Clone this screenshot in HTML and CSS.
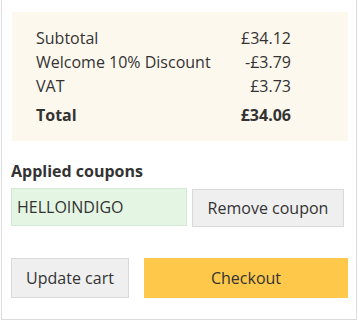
FILE: index.html
```html
<!DOCTYPE html>
<html>
<head>
<meta charset="utf-8">
<link rel="stylesheet" href="styles.css">
</head>
<body>
<div class="card">
  <div class="totals">
    <div class="row"><span>Subtotal</span><span>£34.12</span></div>
    <div class="row"><span>Welcome 10% Discount</span><span>-£3.79</span></div>
    <div class="row"><span>VAT</span><span>£3.73</span></div>
    <div class="row total"><span>Total</span><span>£34.06</span></div>
  </div>
  <div class="coupons">
    <h3 class="coupons-title">Applied coupons</h3>
    <div class="coupon-row">
      <div class="coupon-code">HELLOINDIGO</div>
      <button class="btn btn-remove">Remove coupon</button>
    </div>
  </div>
  <div class="actions">
    <button class="btn btn-update">Update cart</button>
    <button class="btn btn-checkout">Checkout</button>
  </div>
</div>
</body>
</html>
```

FILE: styles.css
```css
html, body {
  margin: 0;
  padding: 0;
  background: #fff;
}
body {
  font-family: "Open Sans", "Liberation Sans", sans-serif;
  color: #333;
  font-size: 16px;
}
.card {
  margin: 0 1px 1px 1px;
  height: 320px;
  box-sizing: border-box;
  border: 1px solid #dcdcdc;
  border-top: none;
  padding: 12px 8px 0 9px;
}
.totals {
  background: #fdf8ee;
  margin-left: 1px;
  padding: 14px 57px 14px 24px;
}
.row {
  display: flex;
  justify-content: space-between;
  line-height: 24px;
}
.row.total {
  font-weight: 700;
  margin-top: 5px;
}
.coupons {
  margin-top: 18px;
}
.coupons-title {
  margin: 0;
  font-size: 16px;
  font-weight: 700;
  line-height: 24px;
}
.coupon-row {
  display: flex;
  gap: 5px;
  margin-top: 5px;
  padding-right: 4px;
}
.coupon-code {
  width: 176px;
  box-sizing: border-box;
  height: 38px;
  line-height: 36px;
  background: #e5f5e4;
  border: 1px solid #d5e8d4;
  padding: 0 5px;
  color: #333;
}
.btn {
  font-family: inherit;
  font-size: 16px;
  color: #333;
  border: 1px solid #d9d9d9;
  background: #efefef;
  cursor: pointer;
  padding: 0;
  box-sizing: border-box;
}
.btn-remove {
  flex: 1;
  height: 38px;
  margin-top: 1px;
}
.actions {
  display: flex;
  gap: 15px;
  margin-top: 31px;
}
.btn-update {
  width: 118px;
  height: 40px;
}
.btn-checkout {
  flex: 1;
  height: 40px;
  background: #fec84b;
  border-color: #fec84b;
}
```
